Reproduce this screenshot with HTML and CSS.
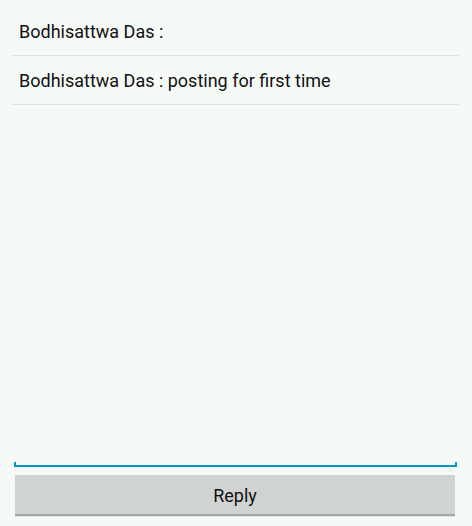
FILE: index.html
```html
<!DOCTYPE html>
<html>
<head>
<meta charset="utf-8">
<link rel="stylesheet" href="styles.css">
</head>
<body>
<div class="screen">
  <ul class="list">
    <li class="row">Bodhisattwa Das :</li>
    <li class="row">Bodhisattwa Das : posting for first time</li>
  </ul>
  <div class="input"></div>
  <button class="reply">Reply</button>
</div>
</body>
</html>
```
FILE: styles.css
```css
html, body {
  margin: 0;
  padding: 0;
  background: #f6faf7;
}
.screen {
  height: 526px;
  display: flex;
  flex-direction: column;
  font-family: Roboto, "Liberation Sans", sans-serif;
  color: #111;
}
.list {
  list-style: none;
  margin: 0;
  padding: 7px 13px 0 11px;
  flex: 1;
}
.row {
  height: 48px;
  display: flex;
  align-items: center;
  padding-left: 8px;
  font-size: 18px;
  border-bottom: 1px solid #e1e5e2;
}
.input {
  margin: 0 15px 8px 14px;
  height: 3px;
  border: 2px solid #0099cc;
  border-top: none;
}
.reply {
  margin: 0 17px 10px 15px;
  height: 41px;
  background: #d0d4d1;
  border: none;
  border-bottom: 2px solid #a4a6a5;
  box-shadow: 0 1px 0 #e4e8e5;
  font-family: Roboto, "Liberation Sans", sans-serif;
  font-size: 18px;
  color: #111;
  padding: 2px 0 0;
}
```
